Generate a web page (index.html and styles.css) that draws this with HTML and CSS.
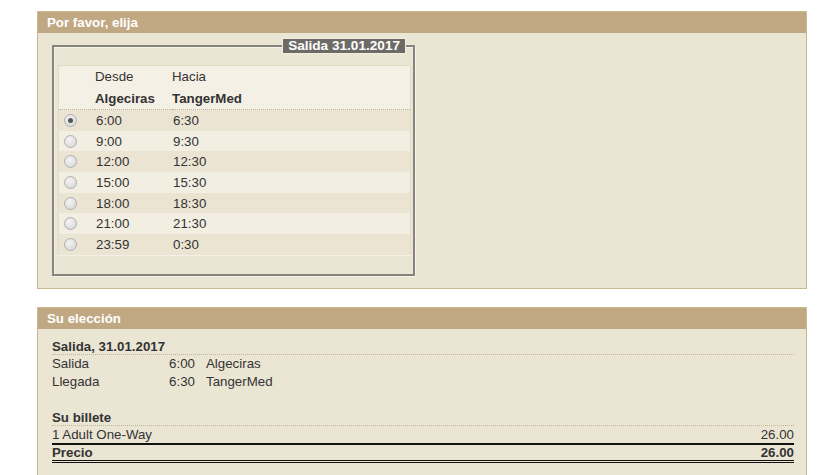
FILE: index.html
```html
<!DOCTYPE html>
<html lang="es">
<head>
    <meta charset="UTF-8">
    <title>Por favor, elija</title>
    <link rel="stylesheet" href="styles.css">
</head>
<body>
    <div class="panel">
        <div class="panel-head">Por favor, elija</div>
        <div class="panel-body choose">
            <fieldset class="trip">
                <legend>Salida 31.01.2017</legend>
                <table class="times">
                    <thead>
                        <tr class="label-row">
                            <th></th>
                            <th>Desde</th>
                            <th>Hacia</th>
                        </tr>
                        <tr class="port-row">
                            <th></th>
                            <th>Algeciras</th>
                            <th>TangerMed</th>
                        </tr>
                    </thead>
                    <tbody>
                        <tr><td><span class="radio checked"></span></td><td>6:00</td><td>6:30</td></tr>
                        <tr><td><span class="radio"></span></td><td>9:00</td><td>9:30</td></tr>
                        <tr><td><span class="radio"></span></td><td>12:00</td><td>12:30</td></tr>
                        <tr><td><span class="radio"></span></td><td>15:00</td><td>15:30</td></tr>
                        <tr><td><span class="radio"></span></td><td>18:00</td><td>18:30</td></tr>
                        <tr><td><span class="radio"></span></td><td>21:00</td><td>21:30</td></tr>
                        <tr><td><span class="radio"></span></td><td>23:59</td><td>0:30</td></tr>
                    </tbody>
                </table>
            </fieldset>
        </div>
    </div>

    <div class="panel">
        <div class="panel-head">Su elección</div>
        <div class="panel-body summary">
            <div class="sum-title">Salida, 31.01.2017</div>
            <div class="leg">
                <span class="leg-label">Salida</span>
                <span class="leg-time">6:00</span>
                <span class="leg-place">Algeciras</span>
            </div>
            <div class="leg">
                <span class="leg-label">Llegada</span>
                <span class="leg-time">6:30</span>
                <span class="leg-place">TangerMed</span>
            </div>

            <div class="sum-title ticket">Su billete</div>
            <div class="price-line">
                <span>1 Adult One-Way</span>
                <span>26.00</span>
            </div>
            <div class="price-line total">
                <span>Precio</span>
                <span>26.00</span>
            </div>
        </div>
    </div>
</body>
</html>
```

FILE: styles.css
```css
body {
    margin: 0;
    padding: 11px 13px 0 37px;
    background-color: #fff;
    font-family: "Liberation Sans", Arial, sans-serif;
    font-size: 13.3px;
    color: #333;
}

.panel {
    width: 768px;
    border: 1px solid #cbb892;
    background-color: #ebe5d4;
    margin-bottom: 18px;
}

.panel-head {
    height: 21px;
    line-height: 21px;
    padding-left: 9px;
    background-color: #bfa882;
    color: #fff;
    font-weight: bold;
}

.choose {
    padding: 5px 0 12px 14px;
}

/* departure box */
.trip {
    width: 353px;
    margin: 0;
    padding: 11px 2px 18px 4px;
    border: 2px solid #86847f;
    box-shadow: 1px 1px 0 #f7f3ea, inset 1px 1px 0 #f7f3ea;
}

.trip legend {
    margin-left: auto;
    margin-right: 5px;
    padding: 0 5px;
    height: 14px;
    line-height: 14px;
    background-color: #6d6b66;
    border: 1px solid #f2ede1;
    color: #fff;
    font-weight: bold;
    font-size: 13.6px;
}

.times {
    width: 100%;
    border-collapse: collapse;
    border: 1px solid #e4dac4;
    background-color: #f5f0e5;
}

.times th {
    text-align: left;
    padding: 0;
    height: 21px;
    line-height: 21px;
}

.times th:first-child {
    width: 36px;
}

.times th:nth-child(2) {
    width: 77px;
}

.label-row th {
    font-weight: normal;
}

.port-row th {
    border-bottom: 1px dotted #bfb398;
    height: 22px;
}

.times td {
    padding: 0 0 0 1px;
    height: 20.7px;
}

.times tbody tr:nth-child(odd) {
    background-color: #ebe4d3;
}

.times tbody tr:nth-child(even) {
    background-color: #f2eee2;
}

.times tbody tr:last-child td {
    border-bottom: 1px solid #f5f0e5;
}

.times td:first-child {
    padding-left: 5px;
}

.radio {
    display: block;
    width: 11px;
    height: 11px;
    border: 1px solid #b0b0b0;
    border-radius: 50%;
    background: radial-gradient(circle at 40% 35%, #f4f4f4, #d2d2d2);
    position: relative;
}

.radio.checked::after {
    content: "";
    position: absolute;
    left: 3px;
    top: 3px;
    width: 5px;
    height: 5px;
    border-radius: 50%;
    background-color: #555;
}

/* summary */
.summary {
    padding: 8px 12px 20px 14px;
    line-height: 18px;
}

.sum-title {
    font-weight: bold;
    padding-top: 2px;
    line-height: 15px;
    border-bottom: 1px dotted #bfb398;
}

.sum-title.ticket {
    margin-top: 17px;
}

.leg {
    display: flex;
}

.leg-label {
    width: 116px;
}

.leg-time {
    width: 27px;
    text-align: right;
    margin-right: 11px;
}

.price-line {
    display: flex;
    justify-content: space-between;
    line-height: 17px;
    border-bottom: 2px solid #111;
}

.price-line.total {
    font-weight: bold;
    border-bottom: 3px double #111;
    line-height: 15px;
}
```
